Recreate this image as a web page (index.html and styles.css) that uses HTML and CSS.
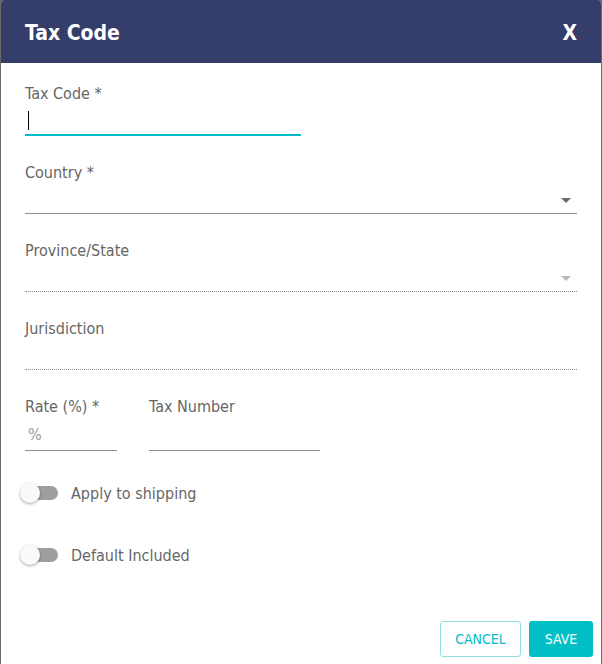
FILE: index.html
```html
<!DOCTYPE html>
<html>
<head>
<meta charset="utf-8">
<link rel="stylesheet" href="styles.css">
</head>
<body>
<div class="dialog">
  <div class="header">
    <span class="title">Tax Code</span>
    <span class="close">X</span>
  </div>
  <div class="content">
    <div class="field half first">
      <div class="label">Tax Code *</div>
      <div class="input focused"><span class="caret"></span></div>
    </div>
    <div class="field">
      <div class="label">Country *</div>
      <div class="input solid"><span class="arrow"></span></div>
    </div>
    <div class="field">
      <div class="label">Province/State</div>
      <div class="input dotted"><span class="arrow light"></span></div>
    </div>
    <div class="field">
      <div class="label">Jurisdiction</div>
      <div class="input dotted"></div>
    </div>
    <div class="row">
      <div class="field rate">
        <div class="label">Rate (%) *</div>
        <div class="input solid short"><span class="placeholder">%</span></div>
      </div>
      <div class="field taxnum">
        <div class="label">Tax Number</div>
        <div class="input solid short"></div>
      </div>
    </div>
    <div class="toggle first-toggle">
      <span class="switch"><span class="track"></span><span class="thumb"></span></span>
      <span class="tlabel">Apply to shipping</span>
    </div>
    <div class="toggle">
      <span class="switch"><span class="track"></span><span class="thumb"></span></span>
      <span class="tlabel">Default Included</span>
    </div>
  </div>
  <div class="actions">
    <button class="btn cancel">CANCEL</button>
    <button class="btn save">SAVE</button>
  </div>
</div>
</body>
</html>
```

FILE: styles.css
```css
html, body {
  margin: 0;
  padding: 0;
  background: #5a5a5a;
}
body {
  width: 602px;
  height: 664px;
  overflow: hidden;
  font-family: "DejaVu Sans Condensed", "DejaVu Sans", sans-serif;
}
.dialog {
  width: 600px;
  height: 664px;
  border-left: 1px solid #6b6b6b;
  border-right: 1px solid #6b6b6b;
  background: #ffffff;
  border-radius: 4px 4px 0 0;
  display: flex;
  flex-direction: column;
  overflow: hidden;
}
.header {
  height: 63px;
  background: #353d6b;
  display: flex;
  align-items: center;
  justify-content: space-between;
  padding: 0 24px;
  color: #ffffff;
  font-weight: bold;
  flex: none;
}
.title {
  font-size: 21px;
  padding-top: 2px;
}
.close {
  font-size: 21px;
  padding-top: 2px;
}
.content {
  padding: 0 24px;
  display: flex;
  flex-direction: column;
  flex: 1;
}
.field {
  display: flex;
  flex-direction: column;
  margin-top: 27px;
}
.field.first {
  margin-top: 21px;
}
.field.half {
  width: 276px;
}
.label {
  font-size: 16px;
  line-height: 20px;
  color: #666666;
}
.input {
  height: 30px;
  position: relative;
  border-bottom: 1px solid #8f8f8f;
}
.input.focused {
  height: 30px;
  border-bottom: 2px solid #00bcc6;
}
.input.dotted {
  border-bottom: 1px dotted #8f8f8f;
}
.caret {
  position: absolute;
  left: 3px;
  top: 7px;
  width: 1px;
  height: 19px;
  background: #000;
}
.arrow {
  position: absolute;
  right: 6px;
  top: 15px;
  width: 0;
  height: 0;
  border-left: 5px solid transparent;
  border-right: 5px solid transparent;
  border-top: 5px solid #6b6b6b;
}
.arrow.light {
  border-top-color: #b8b8b8;
}
.row {
  display: flex;
  gap: 32px;
}
.rate {
  width: 92px;
}
.taxnum {
  width: 171px;
}
.input.short {
  height: 33px;
}
.placeholder {
  position: absolute;
  left: 3px;
  top: 8px;
  font-size: 16px;
  line-height: 20px;
  color: #9a9a9a;
}
.toggle {
  display: flex;
  align-items: center;
  height: 24px;
  margin-top: 38px;
}
.toggle.first-toggle {
  margin-top: 30px;
}
.switch {
  position: relative;
  width: 36px;
  height: 20px;
  margin-left: -3px;
  flex: none;
}
.track {
  position: absolute;
  left: 2px;
  top: 3px;
  width: 34px;
  height: 14px;
  border-radius: 7px;
  background: #9e9e9e;
}
.thumb {
  position: absolute;
  left: -2px;
  top: 0;
  width: 20px;
  height: 20px;
  border-radius: 50%;
  background: #fafafa;
  box-shadow: 0 1px 3px rgba(0,0,0,0.35);
}
.tlabel {
  margin-left: 13px;
  font-size: 16px;
  color: #666666;
}
.actions {
  display: flex;
  justify-content: flex-end;
  gap: 8px;
  padding: 0 8px 7px 0;
  flex: none;
}
.btn {
  height: 36px;
  border-radius: 3px;
  font-family: "DejaVu Sans Condensed", "DejaVu Sans", sans-serif;
  font-size: 14px;
  padding: 0 14px;
  cursor: pointer;
}
.cancel {
  background: #ffffff;
  border: 1px solid #8fe0e4;
  color: #00bcc6;
  width: 81px;
}
.save {
  background: #00bfc6;
  border: none;
  color: #ffffff;
  width: 64px;
}
```
